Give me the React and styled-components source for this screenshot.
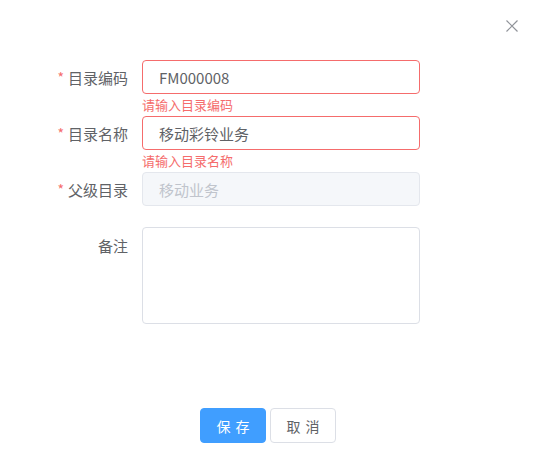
import React from "react";
import styled, { createGlobalStyle } from "styled-components";

const Global = createGlobalStyle`
  html, body { margin: 0; padding: 0; background: #fff; }
  body { font-family: "Noto Sans CJK SC", "Noto Sans", sans-serif; }
  * { box-sizing: border-box; }
`;

const Dialog = styled.div`
  width: 538px;
  height: 461px;
  background: #fff;
  display: flex;
  flex-direction: column;
`;

const Header = styled.div`
  display: flex;
  justify-content: flex-end;
  padding: 20px 20px 0;
  height: 32px;
`;

const CloseBtn = styled.button`
  width: 12px;
  height: 12px;
  padding: 0;
  border: none;
  background: transparent;
  display: flex;
  cursor: pointer;
`;

const Form = styled.form`
  display: flex;
  flex-direction: column;
  gap: 22px;
  padding: 28px 0 0 42px;
`;

const Item = styled.div`
  display: flex;
  align-items: flex-start;
  position: relative;
`;

const Label = styled.label`
  width: 100px;
  height: 34px;
  padding-right: 14px;
  display: flex;
  align-items: center;
  justify-content: flex-end;
  font-size: 15px;
  color: #606266;
`;

const Star = styled.span`
  color: #f56c6c;
  margin-right: 4px;
  font-size: 14px;
`;

const Control = styled.div`
  position: relative;
  width: 278px;
`;

const Input = styled.input`
  width: 100%;
  height: 34px;
  border-radius: 4px;
  border: 1px solid ${(p) => (p.$error ? "#f56c6c" : "#e4e7ed")};
  background: ${(p) => (p.disabled ? "#f5f7fa" : "#fff")};
  color: ${(p) => (p.disabled ? "#c0c4cc" : "#606266")};
  padding: 0 16px;
  font-family: inherit;
  font-size: 15px;
  outline: none;
  &:disabled { -webkit-text-fill-color: #c0c4cc; }
`;

const TextArea = styled.textarea`
  width: 100%;
  height: 97px;
  margin-top: -1px;
  border-radius: 4px;
  border: 1px solid #dcdfe6;
  background: #fff;
  resize: none;
  display: block;
  font-family: inherit;
  font-size: 15px;
  outline: none;
`;

const Error = styled.div`
  position: absolute;
  top: 100%;
  left: 0;
  padding-top: 4px;
  font-size: 13px;
  line-height: 1;
  color: #f56c6c;
  white-space: nowrap;
`;

const Footer = styled.div`
  margin-top: auto;
  padding: 0 2px 18px 0;
  display: flex;
  justify-content: center;
  gap: 4px;
`;

const Button = styled.button`
  width: 66px;
  height: 35px;
  border-radius: 4px;
  font-family: inherit;
  font-size: 14px;
  letter-spacing: 5px;
  text-indent: 5px;
  padding: 0;
  cursor: pointer;
  border: 1px solid ${(p) => (p.$primary ? "#409eff" : "#dcdfe6")};
  background: ${(p) => (p.$primary ? "#409eff" : "#fff")};
  color: ${(p) => (p.$primary ? "#fff" : "#606266")};
`;

const Field = ({ label, required, value, error, disabled }) => (
  <Item>
    <Label>
      {required && <Star>*</Star>}
      {label}
    </Label>
    <Control>
      <Input defaultValue={value} $error={!!error} disabled={disabled} />
      {error && <Error>{error}</Error>}
    </Control>
  </Item>
);

export default function App() {
  return (
    <>
      <Global />
      <Dialog>
        <Header>
          <CloseBtn aria-label="close">
            <svg width="12" height="12" viewBox="0 0 12 12">
              <path d="M0.5 0.5L11.5 11.5M11.5 0.5L0.5 11.5" stroke="#909399" strokeWidth="1.2" />
            </svg>
          </CloseBtn>
        </Header>
        <Form onSubmit={(e) => e.preventDefault()}>
          <Field label="目录编码" required value="FM000008" error="请输入目录编码" />
          <Field label="目录名称" required value="移动彩铃业务" error="请输入目录名称" />
          <Field label="父级目录" required value="移动业务" disabled />
          <Item>
            <Label>备注</Label>
            <Control>
              <TextArea />
            </Control>
          </Item>
        </Form>
        <Footer>
          <Button $primary>保存</Button>
          <Button>取消</Button>
        </Footer>
      </Dialog>
    </>
  );
}
